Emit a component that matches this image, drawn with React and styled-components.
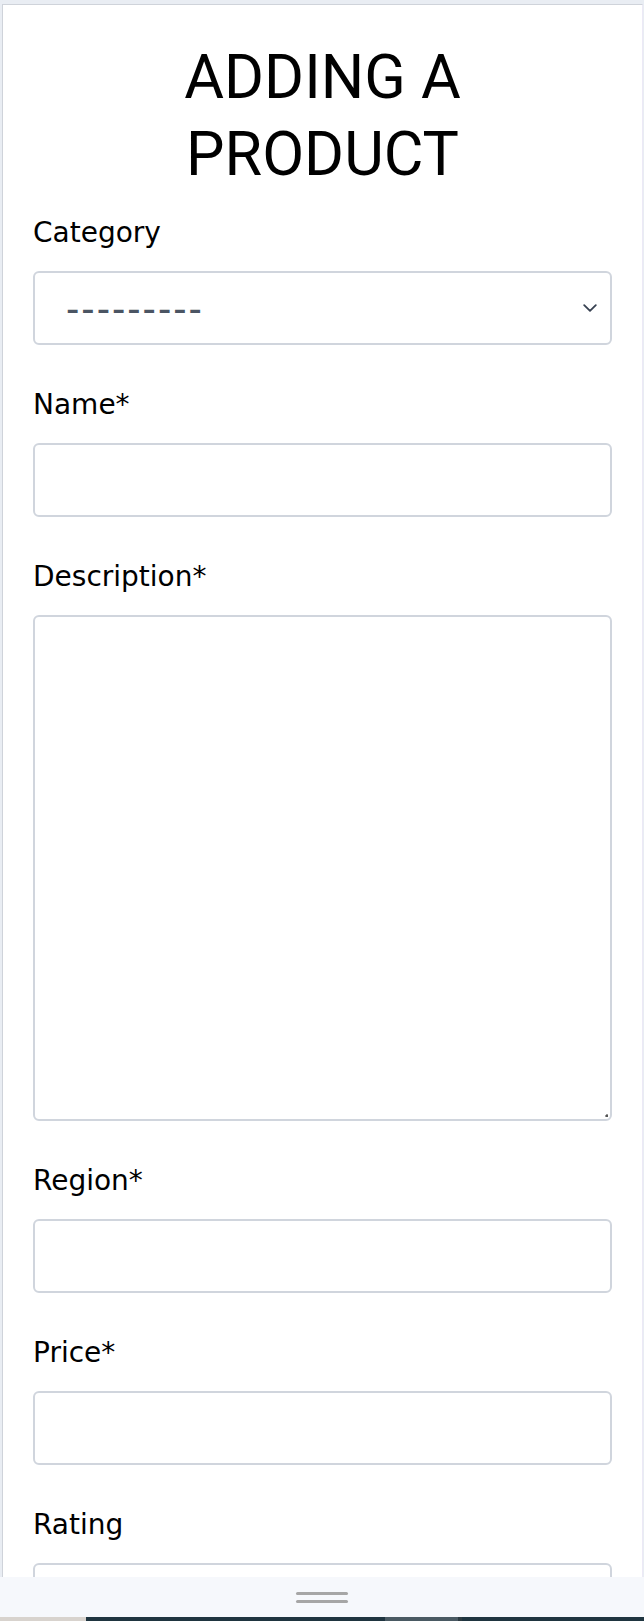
import React from "react";
import styled, { createGlobalStyle } from "styled-components";

const GlobalStyle = createGlobalStyle`
    * {
        box-sizing: border-box;
    }
    body {
        margin: 0;
        background: #e9edf3;
        font-family: "DejaVu Sans", "Liberation Sans", sans-serif;
    }
`;

const fields = [
    { label: "Name*", name: "name" },
    { label: "Description*", name: "description", multiline: true },
    { label: "Region*", name: "region" },
    { label: "Price*", name: "price" },
    { label: "Rating", name: "rating" },
];

export default function App() {
    return (
        <>
            <GlobalStyle />
            <Screen>
                <Frame>
                    <Title>ADDING A PRODUCT</Title>
                    <Form>
                        <Field>
                            <Label htmlFor="category">Category</Label>
                            <SelectWrap>
                                <Select id="category" defaultValue="">
                                    <option value="">---------</option>
                                </Select>
                                <Chevron viewBox="0 0 14 8" fill="none">
                                    <path
                                        d="M1.2 1.2l5.8 5.6 5.8-5.6"
                                        stroke="#374151"
                                        strokeWidth="1.8"
                                        strokeLinecap="round"
                                        strokeLinejoin="round"
                                    />
                                </Chevron>
                            </SelectWrap>
                        </Field>
                        {fields.map((f) => (
                            <Field key={f.name}>
                                <Label htmlFor={f.name}>{f.label}</Label>
                                {f.multiline ? (
                                    <AreaWrap>
                                        <TextArea id={f.name} />
                                        <ResizeDot />
                                    </AreaWrap>
                                ) : (
                                    <Input id={f.name} type="text" />
                                )}
                            </Field>
                        ))}
                    </Form>
                </Frame>
                <Sheet>
                    <Grip />
                    <Grip />
                </Sheet>
                <Taskbar>
                    <TaskSeg $w="86px" $bg="#d8d3ce" />
                    <TaskSeg $w="299px" $bg="#1f3540" />
                    <TaskSeg $w="73px" $bg="#4a5a63" />
                    <TaskSeg $w="4px" $bg="#2d3b42" />
                    <TaskSeg $w="auto" $bg="#1f3540" $grow />
                </Taskbar>
            </Screen>
        </>
    );
}

export const Screen = styled.div`
    position: relative;
    width: 644px;
    height: 1621px;
    overflow: hidden;
    padding-top: 4px;
`;

export const Frame = styled.div`
    margin-left: 2px;
    margin-right: 1px;
    min-height: 1617px;
    background: #fff;
    border-top: 1px solid #cfd3da;
    border-left: 1px solid #cfd3da;
    border-right: 1px solid #ece9f6;
    padding: 34px 30px 0 30px;
`;

export const Title = styled.h1`
    max-width: 380px;
    margin: 0 auto 19px;
    text-align: center;
    font-family: Roboto, "Liberation Sans", sans-serif;
    font-size: 61px;
    font-weight: 400;
    line-height: 77px;
    color: #000;
`;

export const Form = styled.form`
    display: flex;
    flex-direction: column;
    gap: 39px;
`;

export const Field = styled.div`
    display: flex;
    flex-direction: column;
    gap: 17px;
`;

export const Label = styled.label`
    font-size: 28px;
    line-height: 42px;
    color: #000;
`;

const control = `
    width: 100%;
    height: 74px;
    border: 2px solid #d0d5dd;
    border-radius: 6px;
    background: #fff;
    font-family: "DejaVu Sans", "Liberation Sans", sans-serif;
    font-size: 28px;
    color: #111;
    outline: none;
`;

export const SelectWrap = styled.div`
    position: relative;
`;

export const Select = styled.select`
    ${control}
    appearance: none;
    padding: 0 0 0 31px;
    font-family: "Liberation Sans", Arial, sans-serif;
    font-size: 40px;
    letter-spacing: 2px;
    color: #4b5563;
`;

export const Chevron = styled.svg`
    position: absolute;
    right: 15px;
    top: 33px;
    width: 14px;
    height: 8px;
    pointer-events: none;
`;

export const Input = styled.input`
    ${control}
    padding: 0 16px;
`;

export const AreaWrap = styled.div`
    position: relative;
    display: flex;
`;

export const TextArea = styled.textarea`
    ${control}
    height: 506px;
    padding: 12px 16px;
    resize: none;
`;

export const ResizeDot = styled.span`
    position: absolute;
    right: 4px;
    bottom: 4px;
    width: 2px;
    height: 2px;
    background: #555;
    box-shadow: -1px 0 0 #999, 0 -1px 0 #999;
`;

export const Sheet = styled.div`
    position: absolute;
    left: 0;
    right: 0;
    bottom: 4px;
    height: 40px;
    background: #f6f8fc;
    display: flex;
    flex-direction: column;
    align-items: center;
    justify-content: center;
    gap: 5px;
`;

export const Grip = styled.span`
    display: block;
    width: 52px;
    height: 3px;
    border-radius: 2px;
    background: #a6a6a6;
`;

export const Taskbar = styled.div`
    position: absolute;
    left: 0;
    right: 0;
    bottom: 0;
    height: 4px;
    display: flex;
`;

export const TaskSeg = styled.span`
    width: ${(p) => p.$w};
    flex: ${(p) => (p.$grow ? 1 : "none")};
    background: ${(p) => p.$bg};
`;
